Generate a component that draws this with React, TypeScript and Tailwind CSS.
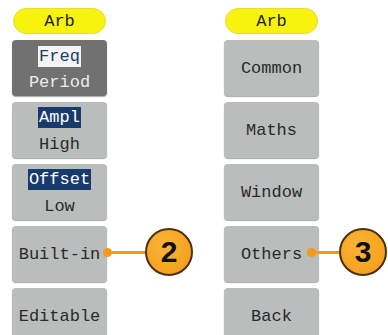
import React from "react";

const mono = { fontFamily: '"Liberation Mono", "Courier New", monospace' };

function Pill() {
  return (
    <div className="mx-[1px] h-[26px] rounded-full bg-[#f7f20e] border border-[#e6dc3c] flex items-center justify-center text-[17px] text-[#1e1e1e] leading-none">
      Arb
    </div>
  );
}

function Btn({ children, dark }: { children: React.ReactNode; dark?: boolean }) {
  return (
    <div
      className={
        "h-[56px] rounded-[4px] flex flex-col items-center justify-center leading-none shadow-[0_1px_1px_rgba(0,0,0,0.35)] " +
        (dark ? "bg-[#717171] text-[#ececec]" : "bg-[#b9bdbc] text-[#2a2a2a]")
      }
    >
      {children}
    </div>
  );
}

function Callout({ dotX, circleX, n }: { dotX: number; circleX: number; n: string }) {
  return (
    <>
      <div
        className="absolute h-[3px] bg-[#f39a17] top-[251px]"
        style={{ left: dotX, width: circleX - dotX + 4 }}
      />
      <div
        className="absolute w-[9px] h-[9px] rounded-full bg-[#f39a17] top-[248px]"
        style={{ left: dotX - 4 }}
      />
      <div
        className="absolute top-[228px] w-[48px] h-[48px] rounded-full bg-[radial-gradient(circle_at_40%_35%,#fbb436,#f39a17)] border-[2px] border-[#4a300c] flex items-center justify-center text-[30px] font-bold text-[#111] leading-none"
        style={{ left: circleX, fontFamily: '"Liberation Sans", Arial, sans-serif' }}
      >
        {n}
      </div>
    </>
  );
}

export default function App() {
  return (
    <div className="relative w-[388px] h-[335px] bg-white overflow-hidden" style={mono}>
      <div className="flex gap-[117px] pl-[12px] pt-[8px] text-[17px]">
        <div className="w-[95px] flex flex-col">
          <Pill />
          <div className="mt-[6px] flex flex-col gap-[6px]">
            <Btn dark>
              <span className="bg-[#f4f4f4] text-[#1b3c70] px-[1px] py-[2px]">Freq</span>
              <span className="mt-[7px]">Period</span>
            </Btn>
            <Btn>
              <span className="bg-[#173a6c] text-white px-[1px] py-[2px]">Ampl</span>
              <span className="mt-[8px]">High</span>
            </Btn>
            <Btn>
              <span className="bg-[#173a6c] text-white px-[1px] py-[2px]">Offset</span>
              <span className="mt-[8px]">Low</span>
            </Btn>
            <Btn>Built-in</Btn>
            <Btn>Editable</Btn>
          </div>
        </div>
        <div className="w-[95px] flex flex-col">
          <Pill />
          <div className="mt-[6px] flex flex-col gap-[6px]">
            <Btn>Common</Btn>
            <Btn>Maths</Btn>
            <Btn>Window</Btn>
            <Btn>Others</Btn>
            <Btn>Back</Btn>
          </div>
        </div>
      </div>
      <Callout dotX={107} circleX={145} n="2" />
      <Callout dotX={311} circleX={339} n="3" />
    </div>
  );
}
